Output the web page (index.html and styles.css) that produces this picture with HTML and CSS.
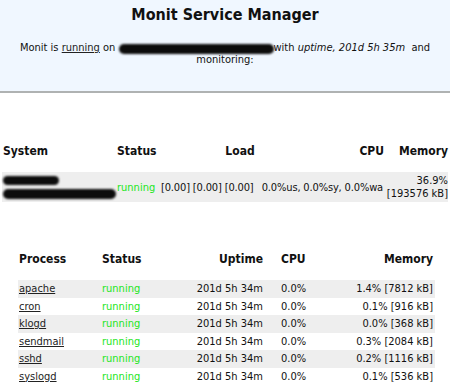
FILE: index.html
```html
<!DOCTYPE html>
<html lang="en">
<head>
    <meta charset="UTF-8">
    <title>Monit Service Manager</title>
    <link rel="stylesheet" href="styles.css">
</head>
<body>
    <div class="header">
        <h1>Monit Service Manager</h1>
        <p class="intro">
            Monit is <a href="#">running</a> on <span class="redact host"></span>with <i>uptime, 201d 5h 35m</i>&nbsp; and<br>
            monitoring:
        </p>
    </div>

    <table class="system">
        <colgroup>
            <col style="width: 114px">
            <col style="width: 44px">
            <col style="width: 160px">
            <col style="width: 66px">
            <col>
        </colgroup>
        <tr>
            <th class="left">System</th>
            <th class="left">Status</th>
            <th class="center">Load</th>
            <th class="right">CPU</th>
            <th class="right">Memory</th>
        </tr>
        <tr class="stripe">
            <td class="left">
                <span class="redact short"></span><br>
                <span class="redact long"></span>
            </td>
            <td class="left ok">running</td>
            <td colspan="2">
                <div class="loadcpu">
                    <span>[0.00]&nbsp;[0.00]&nbsp;[0.00]</span>
                    <span>0.0%us,&nbsp;0.0%sy,&nbsp;0.0%wa</span>
                </div>
            </td>
            <td class="right">36.9%<br>[193576&nbsp;kB]</td>
        </tr>
    </table>

    <table class="process">
        <colgroup>
            <col style="width: 83px">
            <col style="width: 79px">
            <col style="width: 85px">
            <col style="width: 80px">
            <col>
        </colgroup>
        <tr>
            <th class="left">Process</th>
            <th class="left">Status</th>
            <th class="right">Uptime</th>
            <th class="left cpu">CPU</th>
            <th class="right">Memory</th>
        </tr>
        <tr class="stripe">
            <td class="left"><a href="#">apache</a></td>
            <td class="left ok">running</td>
            <td class="right">201d 5h 34m</td>
            <td class="left cpu">0.0%</td>
            <td class="right">1.4% [7812 kB]</td>
        </tr>
        <tr>
            <td class="left"><a href="#">cron</a></td>
            <td class="left ok">running</td>
            <td class="right">201d 5h 34m</td>
            <td class="left cpu">0.0%</td>
            <td class="right">0.1% [916 kB]</td>
        </tr>
        <tr class="stripe">
            <td class="left"><a href="#">klogd</a></td>
            <td class="left ok">running</td>
            <td class="right">201d 5h 34m</td>
            <td class="left cpu">0.0%</td>
            <td class="right">0.0% [368 kB]</td>
        </tr>
        <tr>
            <td class="left"><a href="#">sendmail</a></td>
            <td class="left ok">running</td>
            <td class="right">201d 5h 34m</td>
            <td class="left cpu">0.0%</td>
            <td class="right">0.3% [2084 kB]</td>
        </tr>
        <tr class="stripe">
            <td class="left"><a href="#">sshd</a></td>
            <td class="left ok">running</td>
            <td class="right">201d 5h 34m</td>
            <td class="left cpu">0.0%</td>
            <td class="right">0.2% [1116 kB]</td>
        </tr>
        <tr>
            <td class="left"><a href="#">syslogd</a></td>
            <td class="left ok">running</td>
            <td class="right">201d 5h 34m</td>
            <td class="left cpu">0.0%</td>
            <td class="right">0.1% [536 kB]</td>
        </tr>
    </table>
</body>
</html>
```

FILE: styles.css
```css
body {
    margin: 0;
    font-family: "DejaVu Sans Condensed", "DejaVu Sans", sans-serif;
    font-stretch: condensed;
    font-size: 11px;
    color: #111;
    background: #fff;
}
a {
    color: #222;
    text-decoration: underline;
}
.header {
    background: #f0f7ff;
    border-bottom: 2px solid #afb2b2;
    height: 91px;
    text-align: center;
    overflow: hidden;
}
h1 {
    margin: 5px 0 0;
    font-size: 16px;
    line-height: 20px;
    font-weight: bold;
}
.intro {
    margin: 17px 0 0;
    line-height: 12px;
}
.redact {
    display: inline-block;
    background: #0c0c0c;
    border-radius: 6px;
    filter: blur(0.8px);
}
.host {
    width: 155px;
    height: 10px;
    vertical-align: -3px;
}
.short {
    width: 56px;
    height: 9px;
}
.long {
    width: 113px;
    height: 10px;
    margin-top: 4px;
}
table {
    border-collapse: collapse;
    table-layout: fixed;
}
th {
    font-size: 12px;
    line-height: 14px;
    padding: 0 0 14px;
    vertical-align: top;
}
td {
    padding: 2px 0;
    line-height: 13.5px;
    vertical-align: middle;
    white-space: nowrap;
}
.left { text-align: left; padding-left: 1px; }
.right { text-align: right; padding-right: 2px; }
.center { text-align: center; }
.stripe td { background: #eeeeee; }
.ok { color: #22e622; }
.system {
    width: 446px;
    margin: 51px 0 0 2px;
}
.system td {
    line-height: 13px;
}
.system td.left:first-child {
    line-height: 7px;
    padding-top: 3px;
}
.system th:last-child,
.system td:last-child {
    padding-right: 0;
}
.loadcpu {
    display: flex;
    justify-content: space-between;
    padding: 0 3px 0 1px;
    letter-spacing: -0.15px;
}
.process {
    width: 417px;
    margin: 50px 0 0 18px;
}
.process .cpu {
    padding-left: 16px;
}
```
